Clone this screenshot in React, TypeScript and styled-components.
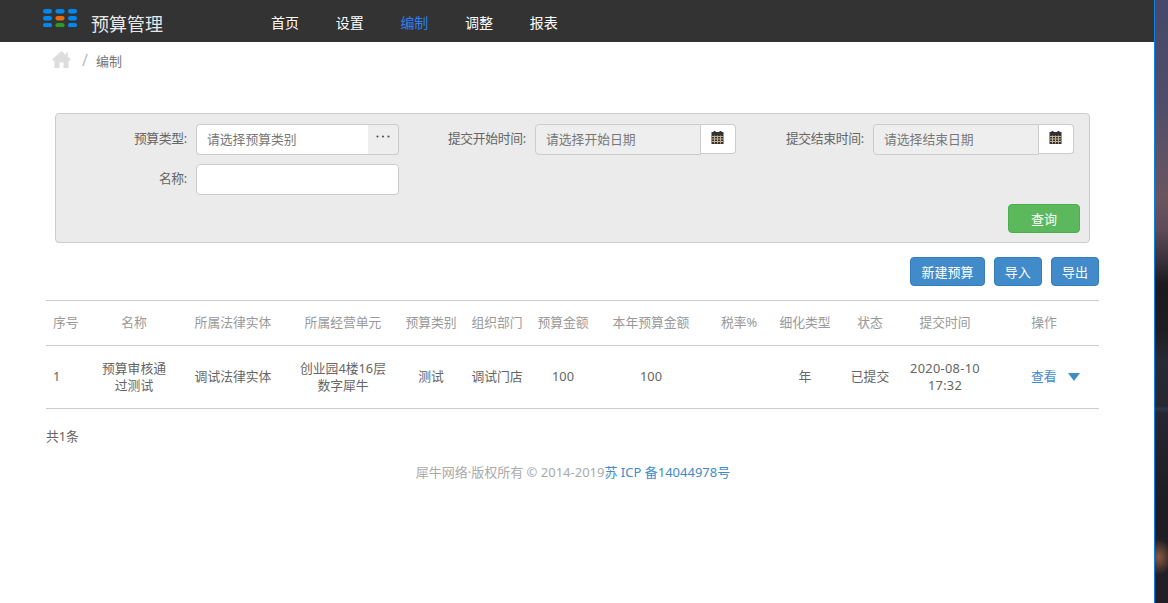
import styled, { createGlobalStyle } from "styled-components";

const GlobalStyle = createGlobalStyle`
  html, body {
    margin: 0;
    padding: 0;
    height: 100%;
    overflow: hidden;
    background: #fff;
    font-family: "Noto Sans", "Noto Sans CJK SC", sans-serif;
    font-size: 12.8px;
    color: #666;
  }
`;

const Page = styled.div`
  display: flex;
  width: 1168px;
  height: 603px;
`;

const Main = styled.div`
  width: 1154px;
  flex: none;
`;

const Desktop = styled.div`
  flex: 1;
  border-left: 1px solid #0f7fe0;
  background:
    radial-gradient(ellipse 14px 18px at 30% 557px, rgba(190, 120, 80, 0.65), transparent),
    linear-gradient(180deg, transparent 0, transparent 406px, rgba(50, 70, 100, 0.5) 409px, transparent 413px),
    linear-gradient(180deg, #47486a 0, #4f4d6a 100px, #6a5560 195px, #5f4c58 228px, #38303a 262px, #1c1a1e 285px, #201d22 330px, #2a2a35 360px, #26252f 430px, #1e1c24 500px, #241f26 603px);
`;

const Header = styled.header`
  display: flex;
  align-items: center;
  height: 42px;
  background: #333;
  padding-left: 43px;
`;

const LogoGrid = styled.svg`
  width: 34px;
  height: 18px;
  margin: 0 14px 6px 0;
  flex: none;
`;

const Brand = styled.div`
  width: 180px;
  padding-top: 3px;
  color: #e8e8e8;
  font-size: 18px;
  flex: none;
`;

const Nav = styled.nav`
  display: flex;
  gap: 36px;
  padding-top: 2px;
`;

const NavItem = styled.a<{ $active?: boolean }>`
  color: ${(p) => (p.$active ? "#2e7ff0" : "#fff")};
  font-size: 14px;
  width: 28.7px;
  white-space: nowrap;
`;

const Crumbs = styled.div`
  display: flex;
  align-items: center;
  height: 38px;
  padding: 0 0 2px 52px;
  box-sizing: border-box;
  color: #777;
  font-size: 13px;
`;

const Slash = styled.span`
  color: #bbb;
  margin: 0 8px 0 11px;
  font-size: 16px;
`;

const HomeIcon = styled.svg`
  width: 19px;
  height: 17px;
  margin-bottom: 2px;
`;

const SearchPanel = styled.section`
  box-sizing: border-box;
  height: 130px;
  margin: 33px 0 0 55px;
  width: 1035px;
  background: #ebebeb;
  border: 1px solid #ccc;
  border-radius: 4px;
  position: relative;
`;

const FormGrid = styled.div`
  display: grid;
  grid-template-columns: 343px 337px 338px;
  row-gap: 9px;
  padding-top: 10px;
`;

const Field = styled.div`
  display: flex;
  align-items: flex-start;
  justify-content: flex-end;
  height: 31px;
`;

const Label = styled.label`
  color: #666;
  line-height: 29px;
  margin-right: 9px;
  letter-spacing: -0.3px;
  white-space: nowrap;
`;

const InputGroup = styled.div<{ $width: number }>`
  display: flex;
  width: ${(p) => p.$width}px;
  height: 31px;
`;

const TextBox = styled.div<{ $disabled?: boolean; $joined?: boolean }>`
  box-sizing: border-box;
  flex: 1;
  display: flex;
  align-items: center;
  padding: 0 0 2px 10px;
  color: #777;
  background: ${(p) => (p.$disabled ? "#eee" : "#fff")};
  border: 1px solid #ccc;
  border-right-width: ${(p) => (p.$disabled || !p.$joined ? "1px" : "0")};
  border-radius: ${(p) => (p.$joined ? "4px 0 0 4px" : "4px")};
`;

const DotsAddon = styled.div`
  box-sizing: border-box;
  width: 31px;
  display: flex;
  align-items: center;
  justify-content: center;
  background: #eee;
  border: 1px solid #ccc;
  border-left: 0;
  border-radius: 0 4px 4px 0;
  padding-bottom: 6px;
`;

const CalendarAddon = styled.div`
  box-sizing: border-box;
  width: 35px;
  height: 30px;
  display: flex;
  align-items: center;
  justify-content: center;
  background: #fff;
  border: 1px solid #ccc;
  border-left: 0;
  border-radius: 0 4px 4px 0;
  padding: 0 2px 3px 0;
`;

const QueryButton = styled.button`
  position: absolute;
  right: 9px;
  bottom: 9px;
  width: 72px;
  height: 29px;
  background: #5cb85c;
  border: 1px solid #4cae4c;
  border-radius: 4px;
  color: #fff;
  font: inherit;
  font-size: 13px;
`;

const Actions = styled.div`
  display: flex;
  justify-content: flex-end;
  gap: 9px;
  width: 1099px;
  margin-top: 14px;
`;

const ActionButton = styled.button`
  height: 29px;
  padding: 0 10.1px;
  background: #428bca;
  border: 1px solid #357ebd;
  border-radius: 4px;
  color: #fff;
  font: inherit;
  font-size: 13px;
`;

const Table = styled.table`
  table-layout: fixed;
  border-collapse: collapse;
  width: 1053px;
  margin: 14px 0 0 46px;
  text-align: center;
`;

const HeadCell = styled.th`
  height: 41px;
  padding: 0 0 3px;
  font-weight: normal;
  color: #999;
  border-top: 1px solid #ccc;
  border-bottom: 1px solid #ccc;
`;

const Cell = styled.td`
  height: 61px;
  padding: 0 0 1px;
  line-height: 17px;
  color: #666;
  border-bottom: 1px solid #ccc;
`;

const IndexHead = styled(HeadCell)`
  text-align: left;
  padding-left: 7px;
`;

const IndexCell = styled(Cell)`
  text-align: left;
  padding-left: 7px;
`;

const OpsHead = styled(HeadCell)`
  padding-right: 3px;
`;

const OpsCell = styled(Cell)`
  text-align: left;
  padding-left: 39px;
`;

const TimeText = styled.span`
  letter-spacing: 0.3px;
`;

const ViewLink = styled.a`
  color: #428bca;
`;

const Caret = styled.span`
  display: inline-block;
  margin-left: 11px;
  border-left: 6.5px solid transparent;
  border-right: 6.5px solid transparent;
  border-top: 8px solid #428bca;
`;

const Total = styled.div`
  margin: 17px 0 0 46px;
  color: #666;
`;

const Footer = styled.footer`
  margin-top: 17px;
  width: 1146px;
  text-align: center;
  color: #aaa;
  font-size: 13px;
`;

const FooterLink = styled.a`
  color: #428bca;
`;

const Calendar = () => (
  <svg width="13" height="13" viewBox="0 0 13 13">
    <rect x="0.5" y="1" width="12" height="12" fill="#333" />
    <rect x="2.5" y="0" width="2" height="2.5" fill="#333" />
    <rect x="8.5" y="0" width="2" height="2.5" fill="#333" />
    <path d="M1 5.5h11M1 8h11M1 10.5h11M3.5 4.5v8M6.5 4.5v8M9.5 4.5v8" stroke="#c4ae92" strokeWidth="1" />
  </svg>
);

const logoColors = [
  ["#0088f0", "#0088f0", "#0088f0"],
  ["#0088f0", "#e66a10", "#0088f0"],
  ["#0088f0", "#2a9a2a", "#0088f0"],
];

const columns = [40, 96, 102, 118, 58, 74, 58, 118, 58, 74, 56, 94, 107];

const heads = ["名称", "所属法律实体", "所属经营单元", "预算类别", "组织部门", "预算金额", "本年预算金额", "税率%", "细化类型", "状态", "提交时间"];

export default function App() {
  return (
    <Page>
      <GlobalStyle />
      <Main>
        <Header>
          <LogoGrid viewBox="0 0 34 18">
            {logoColors.map((row, y) =>
              row.map((c, x) => <rect key={`${x}-${y}`} x={x * 12.5} y={y * 7} width="9" height="4.4" rx="2.2" fill={c} />)
            )}
          </LogoGrid>
          <Brand>预算管理</Brand>
          <Nav>
            <NavItem>首页</NavItem>
            <NavItem>设置</NavItem>
            <NavItem $active>编制</NavItem>
            <NavItem>调整</NavItem>
            <NavItem>报表</NavItem>
          </Nav>
        </Header>
        <Crumbs>
          <HomeIcon viewBox="0 0 19 17">
            <path d="M9.5 0 L14 4 V1.5 H16 V5.8 L19 8.6 L18 9.6 H16.6 V17 H11.5 V11.5 H7.5 V17 H2.4 V9.6 H1 L0 8.6 Z" fill="#ddd" />
          </HomeIcon>
          <Slash>/</Slash>
          编制
        </Crumbs>
        <SearchPanel>
          <FormGrid>
            <Field>
              <Label>预算类型:</Label>
              <InputGroup $width={203}>
                <TextBox $joined>请选择预算类别</TextBox>
                <DotsAddon>
                  <svg width="14" height="3" viewBox="0 0 14 3">
                    <circle cx="1.5" cy="1.5" r="1.1" fill="#555" />
                    <circle cx="7" cy="1.5" r="1.1" fill="#555" />
                    <circle cx="12.5" cy="1.5" r="1.1" fill="#555" />
                  </svg>
                </DotsAddon>
              </InputGroup>
            </Field>
            <Field>
              <Label>提交开始时间:</Label>
              <InputGroup $width={201}>
                <TextBox $disabled $joined>请选择开始日期</TextBox>
                <CalendarAddon><Calendar /></CalendarAddon>
              </InputGroup>
            </Field>
            <Field>
              <Label>提交结束时间:</Label>
              <InputGroup $width={201}>
                <TextBox $disabled $joined>请选择结束日期</TextBox>
                <CalendarAddon><Calendar /></CalendarAddon>
              </InputGroup>
            </Field>
            <Field>
              <Label>名称:</Label>
              <InputGroup $width={203}>
                <TextBox />
              </InputGroup>
            </Field>
          </FormGrid>
          <QueryButton>查询</QueryButton>
        </SearchPanel>
        <Actions>
          <ActionButton>新建预算</ActionButton>
          <ActionButton>导入</ActionButton>
          <ActionButton>导出</ActionButton>
        </Actions>
        <Table>
          <colgroup>
            {columns.map((w, i) => <col key={i} width={w} />)}
          </colgroup>
          <thead>
            <tr>
              <IndexHead>序号</IndexHead>
              {heads.map((h) => <HeadCell key={h}>{h}</HeadCell>)}
              <OpsHead>操作</OpsHead>
            </tr>
          </thead>
          <tbody>
            <tr>
              <IndexCell>1</IndexCell>
              <Cell>预算审核通<br />过测试</Cell>
              <Cell>调试法律实体</Cell>
              <Cell>创业园4楼16层<br />数字犀牛</Cell>
              <Cell>测试</Cell>
              <Cell>调试门店</Cell>
              <Cell>100</Cell>
              <Cell>100</Cell>
              <Cell></Cell>
              <Cell>年</Cell>
              <Cell>已提交</Cell>
              <Cell><TimeText>2020-08-10</TimeText><br /><TimeText>17:32</TimeText></Cell>
              <OpsCell><ViewLink>查看</ViewLink><Caret /></OpsCell>
            </tr>
          </tbody>
        </Table>
        <Total>共1条</Total>
        <Footer>
          犀牛网络·版权所有 © 2014-2019<FooterLink>苏 ICP 备14044978号</FooterLink>
        </Footer>
      </Main>
      <Desktop />
    </Page>
  );
}
